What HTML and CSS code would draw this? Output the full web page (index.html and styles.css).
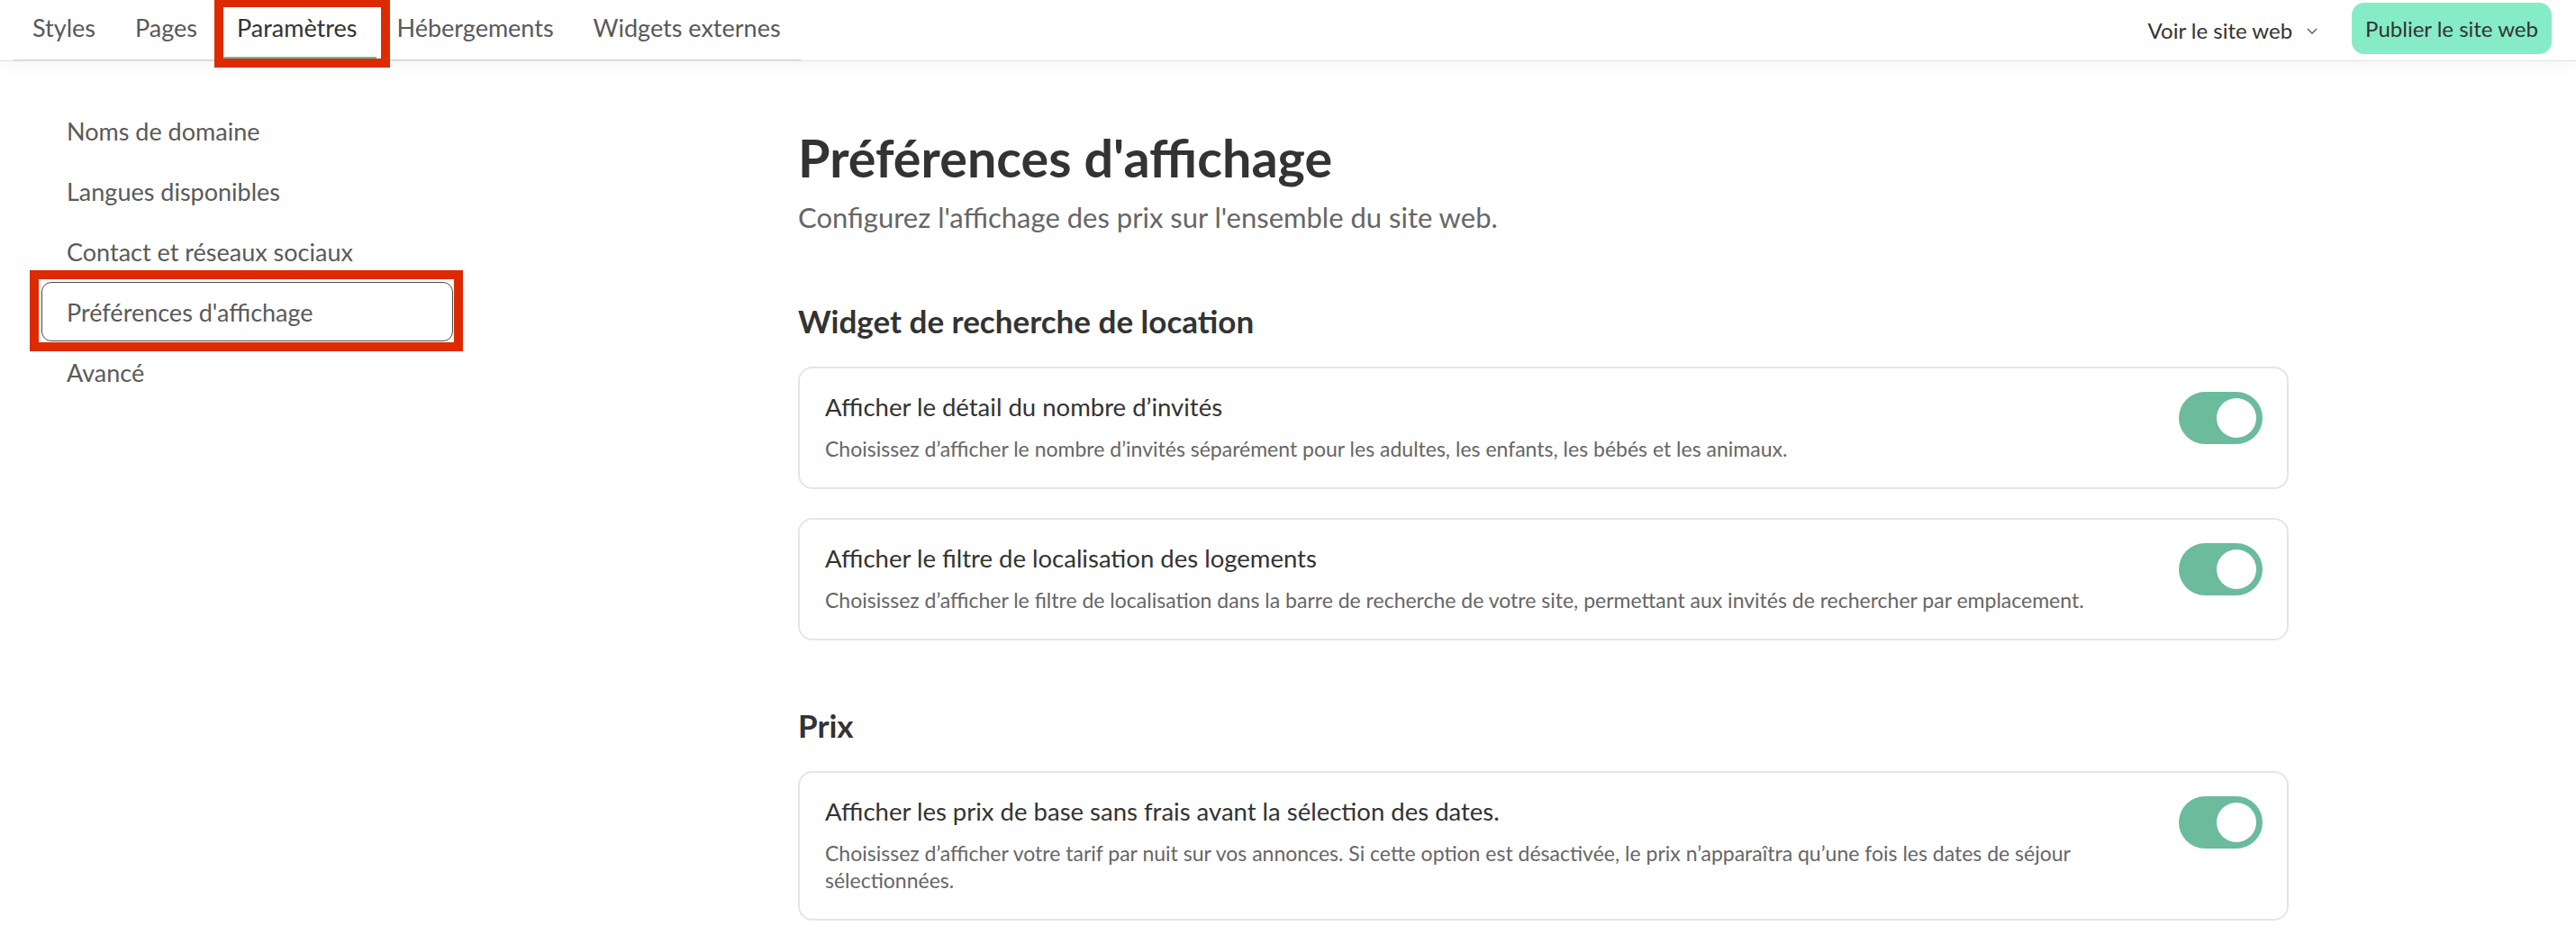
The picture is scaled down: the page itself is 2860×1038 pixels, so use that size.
FILE: index.html
```html
<!DOCTYPE html>
<html lang="fr">
<head>
<meta charset="utf-8">
<title>Préférences d'affichage</title>
<link rel="stylesheet" href="styles.css">
</head>
<body>
<header class="topbar">
  <nav class="tabs">
    <a class="tab">Styles</a>
    <a class="tab">Pages</a>
    <a class="tab tab-active">Paramètres</a>
    <a class="tab">Hébergements</a>
    <a class="tab">Widgets externes</a>
  </nav>
  <div class="actions">
    <div class="view-site">
      <span>Voir le site web</span>
      <svg class="chevron" width="12" height="7" viewBox="0 0 12 7"><path d="M1 1l5 5 5-5" fill="none" stroke="#555" stroke-width="1.3"/></svg>
    </div>
    <button class="publish">Publier le site web</button>
  </div>
</header>

<div class="layout">
  <aside class="sidebar">
    <a class="side-item">Noms de domaine</a>
    <a class="side-item">Langues disponibles</a>
    <a class="side-item">Contact et réseaux sociaux</a>
    <a class="side-item side-active">Préférences d'affichage</a>
    <a class="side-item">Avancé</a>
  </aside>

  <main class="content">
    <h1 class="page-title">Préférences d'affichage</h1>
    <p class="page-sub">Configurez l'affichage des prix sur l'ensemble du site web.</p>

    <section class="section">
      <h2 class="section-title">Widget de recherche de location</h2>
      <div class="cards">
        <div class="card">
          <div class="card-text">
            <div class="card-title">Afficher le détail du nombre d’invités</div>
            <div class="card-desc">Choisissez d’afficher le nombre d’invités séparément pour les adultes, les enfants, les bébés et les animaux.</div>
          </div>
          <div class="toggle"><span class="knob"></span></div>
        </div>
        <div class="card">
          <div class="card-text">
            <div class="card-title">Afficher le filtre de localisation des logements</div>
            <div class="card-desc">Choisissez d’afficher le filtre de localisation dans la barre de recherche de votre site, permettant aux invités de rechercher par emplacement.</div>
          </div>
          <div class="toggle"><span class="knob"></span></div>
        </div>
      </div>
    </section>

    <section class="section section-prix">
      <h2 class="section-title">Prix</h2>
      <div class="cards">
        <div class="card">
          <div class="card-text">
            <div class="card-title">Afficher les prix de base sans frais avant la sélection des dates.</div>
            <div class="card-desc">Choisissez d’afficher votre tarif par nuit sur vos annonces. Si cette option est désactivée, le prix n’apparaîtra qu’une fois les dates de séjour sélectionnées.</div>
          </div>
          <div class="toggle"><span class="knob"></span></div>
        </div>
      </div>
    </section>
  </main>
</div>

<div class="highlight highlight-tab"></div>
<div class="highlight highlight-side"></div>
</body>
</html>
```

FILE: styles.css
```css
* { box-sizing: border-box; }

html, body {
  margin: 0;
  padding: 0;
  background: #ffffff;
}

body {
  font-family: "Lato", "Noto Sans", sans-serif;
  color: #333333;
  width: 2860px;
  height: 1038px;
  overflow: hidden;
  position: relative;
}

/* ---------- Top bar ---------- */
.topbar {
  height: 68px;
  display: flex;
  align-items: stretch;
  border-bottom: 1px solid #e0e0e0;
  box-shadow: 0 4px 22px rgba(0, 0, 0, 0.045);
  position: relative;
  z-index: 1;
  background: #fff;
}

.tabs {
  display: flex;
  margin-left: 15px;
  border-bottom: 2px solid #dadada;
  margin-bottom: -1px;
}

.tab {
  display: flex;
  align-items: center;
  padding: 0 22px 5px;
  font-size: 27px;
  color: #595959;
  cursor: pointer;
}

.tab:first-child { padding-left: 21px; }

.tab-active {
  color: #333333;
  box-shadow: inset 0 -3px 0 #6bbb9c;
}

.actions {
  margin-left: auto;
  display: flex;
  align-items: center;
  padding-right: 27px;
}

.view-site {
  display: flex;
  align-items: center;
  gap: 16px;
  font-size: 24px;
  color: #333333;
  margin-right: 38px;
}

.chevron { display: block; margin-top: 2px; }

.publish {
  height: 57px;
  padding: 0 15px;
  border: 0;
  border-radius: 14px;
  background: #86ebc7;
  color: #333333;
  font-family: inherit;
  font-size: 24px;
  margin-bottom: 4px;
}

/* ---------- Layout ---------- */
.layout {
  display: flex;
}

.sidebar {
  width: 457px;
  margin-left: 46px;
  padding-top: 44px;
  display: flex;
  flex-direction: column;
}

.side-item {
  height: 67px;
  display: flex;
  align-items: center;
  padding-left: 27px;
  font-size: 27px;
  color: #5a5a5a;
  border: 1px solid transparent;
  border-radius: 11px;
}

.side-active {
  border-color: #4a4a4a;
  height: 66px;
  margin-bottom: 1px;
}

.content {
  margin-left: 383px;
  width: 1655px;
  padding-top: 73px;
}

.page-title {
  margin: 0;
  font-size: 57.5px;
  line-height: 67px;
  font-weight: 700;
  color: #333333;
}

.page-sub {
  margin: 13px 0 0;
  font-size: 31px;
  line-height: 40px;
  color: #666666;
}

.section { margin-top: 73px; }
.section-prix { margin-top: 72px; }

.section-title {
  margin: 0 0 29px;
  font-size: 35px;
  line-height: 44px;
  font-weight: 700;
  color: #333333;
}

.cards {
  display: flex;
  flex-direction: column;
  gap: 32px;
}

.card {
  display: flex;
  align-items: flex-start;
  gap: 28px;
  border: 2px solid #e5e5e5;
  border-radius: 16px;
  padding: 25px 27px 28px 28px;
}

.card-text { flex: 1; }

.card-title {
  font-size: 27.5px;
  line-height: 36px;
  color: #333333;
}

.card-desc {
  margin-top: 13px;
  font-size: 23px;
  line-height: 30px;
  color: #666666;
}

.toggle {
  flex-shrink: 0;
  width: 93px;
  height: 58px;
  border-radius: 29px;
  background: #6bbb9c;
  display: flex;
  align-items: center;
  justify-content: flex-end;
  padding: 0 7px;
  margin-top: 1px;
}

.knob {
  width: 44px;
  height: 44px;
  border-radius: 50%;
  background: #ffffff;
}

/* ---------- Annotation highlights ---------- */
.highlight {
  position: absolute;
  border: 10px solid #dc2b00;
  pointer-events: none;
  z-index: 5;
}

.highlight-tab {
  left: 238px;
  top: -2px;
  width: 195px;
  height: 77px;
}

.highlight-side {
  left: 33px;
  top: 300px;
  width: 481px;
  height: 90px;
}
```
